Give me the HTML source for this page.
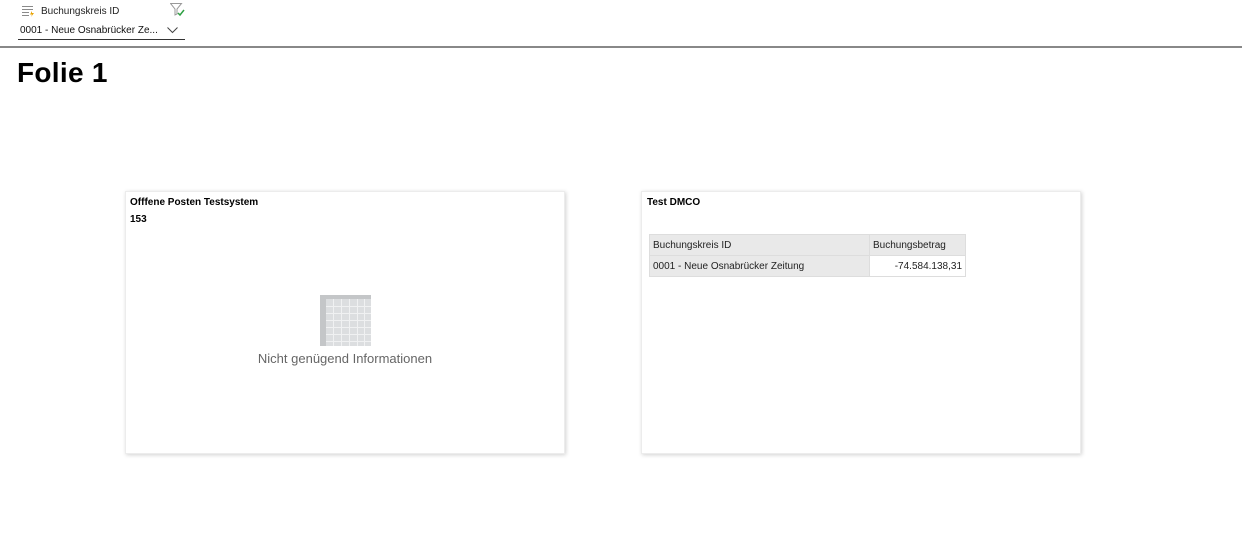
<!DOCTYPE html>
<html><head><meta charset="utf-8"><style>
*{margin:0;padding:0;box-sizing:border-box}
body{width:1242px;height:536px;background:#fff;font-family:"Liberation Sans",sans-serif;position:relative;overflow:hidden;color:#000}
.a{position:absolute}
.card{position:absolute;background:#fff;box-shadow:1px 1px 4px rgba(0,0,0,0.18);border:1px solid #ececec}
.t{font-size:10px;font-weight:bold;position:absolute}
td{font-size:10px;color:#222;height:21px;padding:0 3px;border:1px solid #ddd}
</style></head><body>
<svg class="a" style="left:22px;top:5px" width="14" height="12"><g stroke="#8a8a8a" stroke-width="1"><line x1="0" y1="1.5" x2="11" y2="1.5"/><line x1="0" y1="4.5" x2="11" y2="4.5"/><line x1="0" y1="7.5" x2="7" y2="7.5"/><line x1="0" y1="10.5" x2="7" y2="10.5"/></g><path d="M10 6 L8 9.5 L10 9.5 L9 12 L12 8 L10 8 Z" fill="#e8a200"/></svg>
<div class="a" style="left:41px;top:6px;font-size:10px;color:#222">Buchungskreis ID</div>
<svg class="a" style="left:170px;top:3px" width="16" height="14"><path d="M0.5 0.5 H11.5 L7 6 V11 L5 12 V6 Z" fill="none" stroke="#999"/><path d="M8 10 L10 12 L14 7" fill="none" stroke="#2ea043" stroke-width="1.5"/></svg>
<div class="a" style="left:20px;top:25px;font-size:10px;color:#111">0001 - Neue Osnabrücker Ze...</div>
<svg class="a" style="left:167px;top:27px" width="11" height="7"><path d="M0.5 0.5 L5.5 5.5 L10.5 0.5" fill="none" stroke="#444"/></svg>
<div class="a" style="left:18px;top:39px;width:167px;height:1px;background:#333"></div>
<div class="a" style="left:0;top:46px;width:1242px;height:2px;background:#888"></div>
<div class="a" style="left:17px;top:57px;font-size:28px;font-weight:bold;letter-spacing:0.3px">Folie 1</div>

<div class="card" style="left:125px;top:191px;width:440px;height:263px">
<div class="t" style="left:4px;top:5px">Offfene Posten Testsystem</div>
<div class="t" style="left:4px;top:22px">153</div>
<svg class="a" style="left:194px;top:103px" width="51" height="51">
<rect width="51" height="51" fill="#dcdee0"/><rect width="51" height="4" fill="#c4c6c8"/><rect width="6" height="51" fill="#c4c6c8"/>
<g stroke="#f0f1f2" stroke-width="1"><line x1="13.5" y1="4" x2="13.5" y2="51"/><line x1="21.5" y1="4" x2="21.5" y2="51"/><line x1="29.5" y1="4" x2="29.5" y2="51"/><line x1="37.5" y1="4" x2="37.5" y2="51"/><line x1="44.5" y1="4" x2="44.5" y2="51"/>
<line x1="6" y1="11.5" x2="51" y2="11.5"/><line x1="6" y1="18.5" x2="51" y2="18.5"/><line x1="6" y1="25.5" x2="51" y2="25.5"/><line x1="6" y1="32.5" x2="51" y2="32.5"/><line x1="6" y1="39.5" x2="51" y2="39.5"/><line x1="6" y1="46.5" x2="51" y2="46.5"/></g></svg>
<div class="a" style="left:0;width:438px;top:159px;text-align:center;font-size:13px;color:#666">Nicht genügend Informationen</div>
</div>

<div class="card" style="left:641px;top:191px;width:440px;height:263px">
<div class="t" style="left:5px;top:5px">Test DMCO</div>
<table class="a" style="left:7px;top:42px;border-collapse:collapse;width:317px">
<tr style="background:#e9e9e9"><td style="width:220px">Buchungskreis ID</td><td>Buchungsbetrag</td></tr>
<tr><td style="background:#e9e9e9">0001 - Neue Osnabrücker Zeitung</td><td style="text-align:right">-74.584.138,31</td></tr>
</table>
</div>
</body></html>
